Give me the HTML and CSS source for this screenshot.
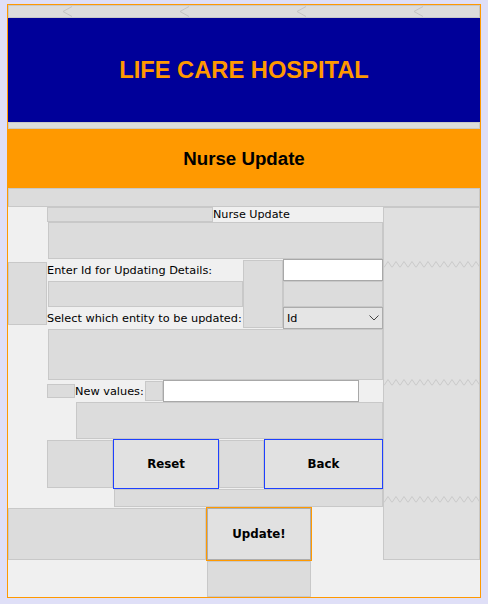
FILE: index.html
```html
<!DOCTYPE html>
<html lang="en">
<head>
  <meta charset="UTF-8">
  <title>Nurse Update</title>
  <link rel="stylesheet" href="styles.css">
</head>
<body>
  <div class="frame">
    <!-- tab strip above the banner -->
    <div class="topstrip">
      <svg width="470" height="11" viewBox="0 0 470 11">
        <polyline points="63,0.5 54,5.5 63,10.5" fill="none" stroke="#c4c4c4"/>
        <polyline points="180,0.5 171,5.5 180,10.5" fill="none" stroke="#c4c4c4"/>
        <polyline points="297,0.5 288,5.5 297,10.5" fill="none" stroke="#c4c4c4"/>
        <polyline points="414,0.5 405,5.5 414,10.5" fill="none" stroke="#c4c4c4"/>
      </svg>
    </div>
    <div class="banner">LIFE CARE HOSPITAL</div>
    <div class="strip-thin"></div>
    <div class="heading">Nurse Update</div>
    <div class="strip-wide"></div>

    <div class="content">
      <div class="main">
        <div class="form">
          <div class="row">
            <div class="fill f-title"></div>
            <span class="caption">Nurse Update</span>
          </div>
          <div class="fill f-gap1"></div>

          <div class="row row-fields">
            <div class="fill f-left"></div>
            <div class="labels">
              <label class="lbl">Enter Id for Updating Details:</label>
              <div class="fill f-mid"></div>
              <label class="lbl">Select which entity to be updated:</label>
            </div>
            <div class="fill f-spacer"></div>
            <div class="inputs">
              <input class="textbox" type="text">
              <div class="fill f-mid2"></div>
              <div class="combo">
                <span>Id</span>
                <svg width="10" height="6" viewBox="0 0 10 6">
                  <polyline points="0.5,0.5 5,5 9.5,0.5" fill="none" stroke="#444" stroke-width="1"/>
                </svg>
              </div>
            </div>
          </div>

          <div class="fill f-gap2"></div>

          <div class="row">
            <div class="fill f-dot"></div>
            <label class="lbl lbl-new">New values:</label>
            <div class="fill f-pad"></div>
            <input class="textbox textbox-wide" type="text">
          </div>

          <div class="fill f-gap3"></div>

          <div class="row">
            <div class="fill f-btnleft"></div>
            <button class="btn btn-reset">Reset</button>
            <div class="fill f-btnmid"></div>
            <button class="btn btn-back">Back</button>
          </div>

          <div class="fill f-gap4"></div>

          <div class="row">
            <div class="fill f-foot"></div>
            <button class="btn btn-update">Update!</button>
          </div>
        </div>

        <div class="side">
          <svg class="zig zig-first" width="95" height="9">
            <defs>
              <pattern id="zz" width="8" height="9" patternUnits="userSpaceOnUse">
                <polyline points="0,7.5 4,1.5 8,7.5" fill="none" stroke="#c9c9c9"/>
              </pattern>
            </defs>
            <rect width="95" height="9" fill="url(#zz)"/>
          </svg>
          <svg class="zig zig-second" width="95" height="9"><rect width="95" height="9" fill="url(#zz)"/></svg>
          <svg class="zig zig-third" width="95" height="9"><rect width="95" height="9" fill="url(#zz)"/></svg>
        </div>
      </div>

      <div class="fill f-bottom"></div>
    </div>
  </div>
</body>
</html>
```

FILE: styles.css
```css
body {
  margin: 0;
  background-color: #dfdff7;
  font-family: "DejaVu Sans", Verdana, sans-serif;
  color: #000;
}

.frame {
  margin: 4px 0 0 7px;
  width: 472px;
  height: 592px;
  border: 1px solid #ff9900;
  background-color: #f0f0f0;
  display: flex;
  flex-direction: column;
}

.topstrip {
  height: 13px;
  box-sizing: border-box;
  border: 1px solid #c8c8c8;
  background-color: #dcdcdc;
}
.topstrip svg {
  display: block;
}

.banner {
  height: 104px;
  background-color: #000099;
  color: #ff9900;
  font-family: "Liberation Sans", Arial, sans-serif;
  font-weight: bold;
  font-size: 23.7px;
  display: flex;
  justify-content: center;
  align-items: center;
}

.strip-thin {
  height: 7px;
  box-sizing: border-box;
  border: 1px solid #c8c8c8;
  background-color: #dcdcdc;
}

.heading {
  height: 59px;
  background-color: #ff9900;
  font-family: "Liberation Sans", Arial, sans-serif;
  font-weight: bold;
  font-size: 18.7px;
  display: flex;
  justify-content: center;
  align-items: center;
}

.strip-wide {
  height: 19px;
  box-sizing: border-box;
  border: 1px solid #c8c8c8;
  background-color: #dcdcdc;
}

.content {
  display: flex;
  flex-direction: column;
}

.main {
  display: flex;
}

.form {
  width: 375px;
  display: flex;
  flex-direction: column;
}

.row {
  display: flex;
  align-items: flex-start;
}

/* empty grid cells */
.fill {
  box-sizing: border-box;
  background-color: #dcdcdc;
  border: 1px solid #c8c8c8;
  flex-shrink: 0;
}

.f-title { margin-left: 39px; width: 166px; height: 15px; }
.f-gap1 { margin-left: 40px; width: 335px; height: 37px; }
.f-left { width: 39px; height: 63px; margin-top: 3px; }
.f-mid { margin-left: 1px; width: 195px; height: 26px; }
.f-spacer { width: 40px; height: 68px; margin-top: 1px; }
.f-mid2 { width: 100px; height: 26px; }
.f-gap2 { margin-left: 40px; width: 335px; height: 51px; }
.f-dot { margin-left: 39px; width: 28px; height: 14px; margin-top: 4px; }
.f-pad { width: 18px; height: 20px; margin-top: 1px; }
.f-gap3 { margin-left: 68px; width: 307px; height: 37px; }
.f-btnleft { margin-left: 39px; width: 66px; height: 48px; margin-top: 1px; }
.f-btnmid { width: 45px; height: 48px; margin-top: 1px; }
.f-gap4 { margin-left: 106px; width: 269px; height: 18px; }
.f-foot { width: 198px; height: 52px; margin-top: 1px; }
.f-bottom { margin-left: 199px; width: 104px; height: 36px; }

.caption {
  font-size: 11.2px;
  line-height: 15px;
  white-space: nowrap;
}

.row-fields {
  height: 70px;
}

.labels {
  width: 196px;
  display: flex;
  flex-direction: column;
}

.lbl {
  height: 22px;
  line-height: 23px;
  font-size: 11.3px;
  white-space: nowrap;
}

.lbl-new {
  width: 70px;
}

.inputs {
  width: 100px;
  display: flex;
  flex-direction: column;
}

.textbox {
  box-sizing: border-box;
  width: 100px;
  height: 22px;
  margin: 0;
  padding: 0 3px;
  background-color: #fff;
  border: 1px solid #a8a8a8;
  font-family: inherit;
  font-size: 11.2px;
}
.textbox-wide {
  width: 196px;
}

.combo {
  box-sizing: border-box;
  height: 22px;
  background-color: #e5e5e5;
  border: 1px solid #acacac;
  padding: 0 3px 0 3px;
  font-size: 11.2px;
  display: flex;
  justify-content: space-between;
  align-items: center;
}

.btn {
  box-sizing: border-box;
  height: 50px;
  margin: 0;
  padding: 0;
  background-color: #e1e1e1;
  border: 1px solid #1e40ff;
  font-family: "DejaVu Sans", Verdana, sans-serif;
  font-weight: bold;
  font-size: 11.8px;
  color: #000;
  flex-shrink: 0;
}
.btn-reset { width: 106px; }
.btn-back { width: 119px; }
.btn-update {
  width: 106px;
  height: 54px;
  border-color: #ff9900;
  box-shadow: inset 0 0 0 1px #adadad;
}

.side {
  width: 97px;
  height: 353px;
  box-sizing: border-box;
  background-color: #e0e0e0;
  border: 1px solid #c8c8c8;
  display: flex;
  flex-direction: column;
}

.zig {
  display: block;
  flex-shrink: 0;
}
.zig-first { margin-top: 52px; }
.zig-second { margin-top: 109px; }
.zig-third { margin-top: 108px; }
```
